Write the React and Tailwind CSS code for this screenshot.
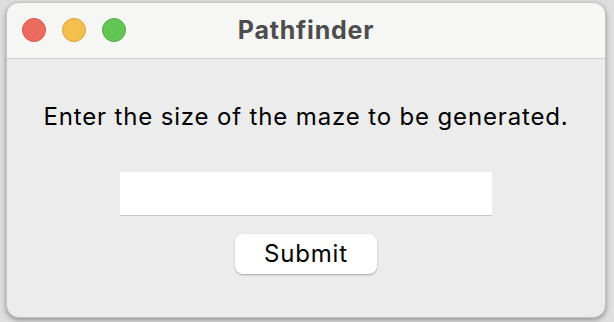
export default function App() {
  return (
    <div className="w-[614px] h-[322px] bg-[#dedede] pt-[2px] pl-[6px] overflow-hidden" style={{ fontFamily: "Inter, 'Liberation Sans', sans-serif" }}>
      <div className="w-[600px] h-[316px] rounded-[13px] bg-[#ececec] border border-[#c4c4c4] shadow-[0_2px_5px_rgba(0,0,0,0.35)] overflow-hidden flex flex-col">
        {/* title bar */}
        <div className="relative h-[56px] shrink-0 bg-[#f6f6f5] border-b border-[#cfcfcf] flex items-center justify-center">
          <div className="absolute left-[15px] top-[15px] flex gap-[16px]">
            <span className="w-[24px] h-[24px] rounded-full bg-[#ed6a5e] border border-[#d6564b]" />
            <span className="w-[24px] h-[24px] rounded-full bg-[#f5bf4f] border border-[#d9a33c]" />
            <span className="w-[24px] h-[24px] rounded-full bg-[#62c554] border border-[#52a944]" />
          </div>
          <span className="text-[25px] font-bold text-[#4d4d4d] tracking-[0.8px]">Pathfinder</span>
        </div>
        {/* content */}
        <div className="flex flex-col items-center pt-[43px]">
          <p className="text-[24px] text-black leading-[30px] tracking-[0.85px] whitespace-nowrap">Enter the size of the maze to be generated.</p>
          <input className="mt-[40px] w-[372px] h-[44px] bg-white border-b border-[#c8c8c8] outline-none" />
          <button className="mt-[18px] w-[142px] h-[40px] rounded-[8px] bg-white shadow-[0_1px_2px_rgba(0,0,0,0.3)] text-[24px] tracking-[0.8px] text-black">
            Submit
          </button>
        </div>
      </div>
    </div>
  );
}
